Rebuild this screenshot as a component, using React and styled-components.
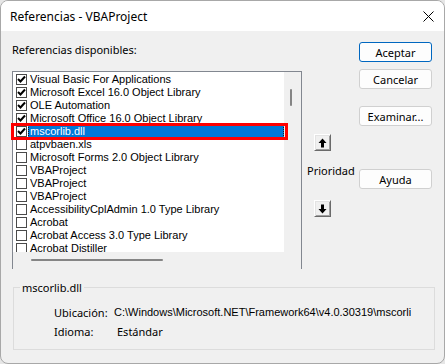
import React from 'react'
import styled, { createGlobalStyle } from 'styled-components'

const Global = createGlobalStyle`
	html, body {
		margin:0;
		padding:0;
		background:#e6e6e6;
	}
	* { box-sizing:border-box; }
`

const Ventana = styled.div`
	width:445px;
	height:364px;
	border:1px solid #a8a8a8;
	border-radius:8px;
	overflow:hidden;
	background:#f0f0f0;
	display:flex;
	flex-direction:column;
	font-family:"Liberation Sans", Arial, sans-serif;
	font-size:11px;
	color:#000;
`
const BarraTitulo = styled.div`
	height:30px;
	background:#fff;
	display:flex;
	align-items:center;
	justify-content:space-between;
	padding:0 10px 0 9px;
	font-family:"Noto Sans", "Open Sans", sans-serif;
	font-size:12px;
	flex-shrink:0;
`
const Contenido = styled.div`
	padding:0 11px;
	display:flex;
	flex-direction:column;
`
const Fila = styled.div`
	display:flex;
	align-items:flex-start;
`
const ColIzq = styled.div`
	width:290px;
	padding-top:12px;
	display:flex;
	flex-direction:column;
`
const Etiqueta = styled.div`
	line-height:13px;
	font-family:"Noto Sans", "Open Sans", sans-serif;
	font-size:11px;
	white-space:nowrap;
`
const Lista = styled.div`
	position:relative;
	margin-top:15px;
	height:198px;
	border:1px solid #828790;
	display:grid;
	grid-template-columns:271px 17px;
	grid-template-rows:180px 17px;
`
const Items = styled.div`
	background:#fff;
	overflow:hidden;
	padding-top:1px;
`
const Item = styled.div`
	height:13px;
	display:flex;
	align-items:center;
	padding-left:3px;
	white-space:nowrap;
`
const Casilla = styled.span`
	width:11px;
	height:11px;
	border:1px solid #4a4a4a;
	background:#fff;
	display:flex;
	align-items:center;
	justify-content:center;
	flex-shrink:0;
	margin-right:1px;
`
const Texto = styled.span`
	flex:1;
	height:13px;
	line-height:11px;
	padding-left:1px;
	border:1px solid ${p => p.sel ? '#1a1a1a' : 'transparent'};
	border-style:${p => p.sel ? 'dotted' : 'solid'};
	background:${p => p.sel ? '#0078d7' : 'transparent'};
	color:${p => p.sel ? '#fff' : '#000'};
`
const BarraV = styled.div`
	position:relative;
	background:#f0f0f0;
`
const PulgarV = styled.div`
	position:absolute;
	left:6px;
	top:17px;
	width:2px;
	height:17px;
	border-radius:1px;
	background:#858585;
`
const BarraH = styled.div`
	position:relative;
	background:#f0f0f0;
`
const PulgarH = styled.div`
	position:absolute;
	left:18px;
	top:7px;
	width:132px;
	height:2px;
	border-radius:1px;
	background:#858585;
`
const Esquina = styled.div`
	background:#f0f0f0;
`
const MarcoRojo = styled.div`
	position:absolute;
	left:-2px;
	top:51px;
	width:277px;
	height:17px;
	border:3px solid #ff0000;
	pointer-events:none;
`
const ColPrioridad = styled.div`
	width:45px;
	margin-left:5px;
	padding-top:103px;
	display:flex;
	flex-direction:column;
	align-items:flex-start;
`
const BotonFlecha = styled.div`
	width:17px;
	height:17px;
	margin-left:7px;
	margin-top:${p => p.mt || 0}px;
	background:#f0f0f0;
	border-top:1px solid #fff;
	border-left:1px solid #fff;
	border-right:1px solid #6a6a6a;
	border-bottom:1px solid #6a6a6a;
	box-shadow:1px 1px 0 #e3e3e3 inset, -1px -1px 0 #a0a0a0 inset;
	display:flex;
	align-items:center;
	justify-content:center;
`
const TextoPrioridad = styled.div`
	margin-top:13px;
	line-height:13px;
	font-family:"Noto Sans", "Open Sans", sans-serif;
	font-size:11px;
`
const ColBotones = styled.div`
	width:73px;
	margin-left:7px;
	padding-top:11px;
	display:flex;
	flex-direction:column;
`
const Boton = styled.div`
	height:20px;
	margin-top:${p => p.mt || 0}px;
	border:1px solid ${p => p.def ? '#0067c0' : '#d0d0d0'};
	border-radius:3px;
	background:#fdfdfd;
	display:flex;
	align-items:center;
	justify-content:center;
	font-family:"Noto Sans", "Open Sans", sans-serif;
	font-size:11px;
`
const Grupo = styled.div`
	position:relative;
	margin-top:18px;
	margin-left:1px;
	width:422px;
	height:63px;
	border:1px solid #dcdcdc;
	padding:18px 0 0 40px;
`
const Leyenda = styled.div`
	position:absolute;
	top:-7px;
	left:6px;
	padding:0 2px;
	line-height:13px;
	background:#f0f0f0;
	font-family:"Noto Sans", "Open Sans", sans-serif;
	font-size:11px;
`
const Dato = styled.div`
	display:flex;
	line-height:13px;
	margin-top:${p => p.mt || 0}px;
	font-family:"Noto Sans", "Open Sans", sans-serif;
	font-size:11px;
	white-space:nowrap;
`
const Nombre = styled.span`
	width:${p => p.w}px;
	flex-shrink:0;
`
const Valor = styled.span`
	width:297px;
	overflow:hidden;
	font-family:${p => p.ruta ? '"Liberation Sans", Arial, sans-serif' : 'inherit'};
`

const referencias = [
	['Visual Basic For Applications', true],
	['Microsoft Excel 16.0 Object Library', true],
	['OLE Automation', true],
	['Microsoft Office 16.0 Object Library', true],
	['mscorlib.dll', true, true],
	['atpvbaen.xls', false],
	['Microsoft Forms 2.0 Object Library', false],
	['VBAProject', false],
	['VBAProject', false],
	['VBAProject', false],
	['AccessibilityCplAdmin 1.0 Type Library', false],
	['Acrobat', false],
	['Acrobat Access 3.0 Type Library', false],
	['Acrobat Distiller', false],
]

const Check = () => (
	<svg width="9" height="9" viewBox="0 0 9 9">
		<path d="M1 4 L3.5 6.5 L8 1.5" fill="none" stroke="#000" strokeWidth="2" />
	</svg>
)

const Flecha = ({ abajo }) => (
	<svg width="9" height="10" viewBox="0 0 9 10" style={abajo ? { transform: 'rotate(180deg)' } : null}>
		<path d="M4.5 0.5 L8.5 5 L6 5 L6 9.5 L3 9.5 L3 5 L0.5 5 Z" fill="#000" />
	</svg>
)

export default () => (
	<>
		<Global />
		<Ventana>
			<BarraTitulo>
				<span>Referencias - VBAProject</span>
				<svg width="11" height="11" viewBox="0 0 11 11">
					<path d="M0.5 0.5 L10.5 10.5 M10.5 0.5 L0.5 10.5" stroke="#000" strokeWidth="1" />
				</svg>
			</BarraTitulo>
			<Contenido>
				<Fila>
					<ColIzq>
						<Etiqueta>Referencias disponibles:</Etiqueta>
						<Lista>
							<Items>
								{referencias.map(([nombre, marcado, sel], i) => (
									<Item key={i}>
										<Casilla>{marcado && <Check />}</Casilla>
										<Texto sel={sel}>{nombre}</Texto>
									</Item>
								))}
							</Items>
							<BarraV><PulgarV /></BarraV>
							<BarraH><PulgarH /></BarraH>
							<Esquina />
							<MarcoRojo />
						</Lista>
					</ColIzq>
					<ColPrioridad>
						<BotonFlecha><Flecha /></BotonFlecha>
						<TextoPrioridad>Prioridad</TextoPrioridad>
						<BotonFlecha mt={23}><Flecha abajo /></BotonFlecha>
					</ColPrioridad>
					<ColBotones>
						<Boton def>Aceptar</Boton>
						<Boton mt={7}>Cancelar</Boton>
						<Boton mt={17}>Examinar...</Boton>
						<Boton mt={43}>Ayuda</Boton>
					</ColBotones>
				</Fila>
				<Grupo>
					<Leyenda>mscorlib.dll</Leyenda>
					<Dato>
						<Nombre w={60}>Ubicación:</Nombre>
						<Valor ruta>C:\Windows\Microsoft.NET\Framework64\v4.0.30319\mscorlib.dll</Valor>
					</Dato>
					<Dato mt={6}>
						<Nombre w={63}>Idioma:</Nombre>
						<Valor>Estándar</Valor>
					</Dato>
				</Grupo>
			</Contenido>
		</Ventana>
	</>
)
